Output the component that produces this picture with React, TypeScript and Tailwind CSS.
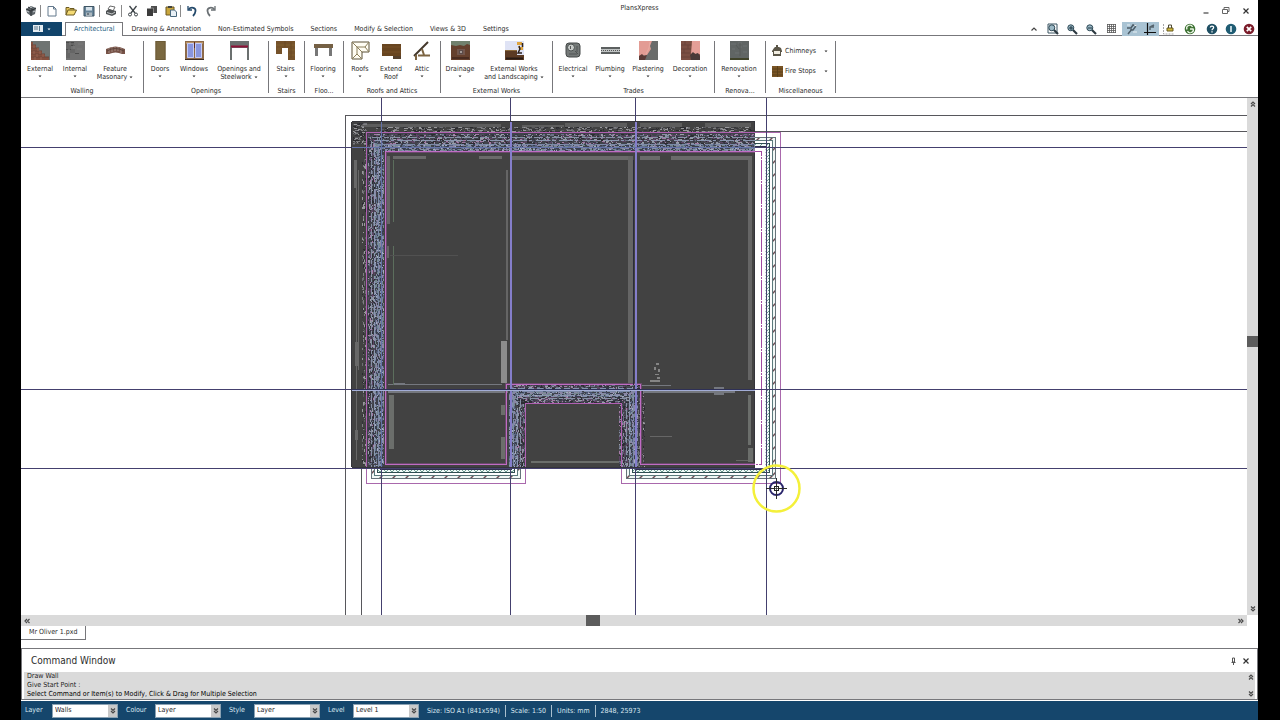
import React, { useMemo, useState } from 'react'

type IconProps = { className?: string }

interface RibbonItem {
  lines: string[]
  icon: React.ReactNode
  width: string
  menu?: boolean
}

interface RibbonGroup {
  title: string
  label?: string
  width: string
  items: RibbonItem[]
}

/* ---------- ribbon icons (19 x 19) ---------- */

const Tile = ({ children }: { children: React.ReactNode }) => (
  <svg className="h-[19px] w-[19px]" viewBox="0 0 19 19" aria-hidden="true">
    {children}
  </svg>
)

const externalIcon = (
  <Tile>
    <rect width="19" height="19" fill="#6f7472" />
    <path d="M0 1h2v3h3v3h3v3h3v3h3v3h4v3H0z" fill="#85503f" />
    <path d="M0 4h5M0 7h8M0 10h11M0 13h14M0 16h18" stroke="#6d463b" />
    <path d="M3 4v3M7 7v3M3 10v3M9 10v3M6 13v3M12 13v3M4 16v3M10 16v3" stroke="#976454" />
  </Tile>
)

const internalIcon = (
  <Tile>
    <rect width="19" height="19" fill="#717171" />
    <path d="M0 1h8v3H5v4h4v4H4v5H0z" fill="#666" />
    <path d="M0 1.500h8M5 4.500h4M0 8.500h5M9 12.500h4" stroke="#4c4c4c" />
    <path d="M4 1v3M8 4v4M3 8v4M12 3h5M11 8h5" stroke="#7c7c7c" />
  </Tile>
)

const masonryIcon = (
  <Tile>
    <path d="M0 8Q9.500 3 19 8v5h-3q-6.500-3-13 0H0z" fill="#775348" />
    <path d="M3 7v5M6 6v5M9 6v4M12 6v4M15 7v5" stroke="#a48b80" />
    <path d="M1 10q8-5 17 0" fill="none" stroke="#5c443b" />
  </Tile>
)

const doorsIcon = (
  <Tile>
    <rect x="4.500" width="10" height="19" fill="#7a6840" />
    <rect x="5" y=".5" width="9" height="18" fill="none" stroke="#6c5b36" />
  </Tile>
)

const windowsIcon = (
  <Tile>
    <rect width="19" height="19" fill="#8d6a49" />
    <rect x="1" y="1" width="17" height="2" fill="#b99366" />
    <rect x="2" y="2" width="7" height="15" fill="#8995dd" />
    <rect x="10" y="2" width="7" height="15" fill="#8995dd" />
    <path d="M2.500 2.500h6v14h-6zM10.500 2.500h6v14h-6z" fill="none" stroke="#c6cbf4" />
    <path d="M9.500 1v6" stroke="#5c2b22" />
    <path d="M0 18.500h19" stroke="#3c2b22" />
  </Tile>
)

const openingsIcon = (
  <Tile>
    <path d="M0 0h19v19h-2V7H2v12H0z" fill="#6b706f" />
    <path d="M1 5.500h17" stroke="#8e1238" strokeWidth="2" />
  </Tile>
)

const stairsIcon = (
  <Tile>
    <path d="M0 0h19v19h-7V7H6v6H0z" fill="#75522a" />
    <path d="M0 4h19M1 8h4M13 9h6M13 14h6" stroke="#80602f" />
    <path d="M9 0v6M15 1v16" stroke="#6a4923" />
  </Tile>
)

const flooringIcon = (
  <Tile>
    <path d="M0 3h19v4H0z" fill="#756044" />
    <path d="M1 7h3v8H1zM15 7h3v8h-3z" fill="#777" />
  </Tile>
)

const roofsIcon = (
  <Tile>
    <path d="M1 1h17v10h-7v7H1z" fill="#fffdf3" stroke="#5a5137" />
    <path d="M1 1l5 5v7l-5 5M6 6h8l4-5M14 6l4 5M6 13l5 5M6 6l5 5" fill="none" stroke="#8b7f5b" />
  </Tile>
)

const extendRoofIcon = (
  <Tile>
    <path d="M0 3h19v15h-8v-3H0z" fill="#684520" />
    <path d="M0 6h19M0 11h19" stroke="#775126" />
    <path d="M11 15h8v3h-8z" fill="#54402d" />
  </Tile>
)

const atticIcon = (
  <Tile>
    <path d="M1 15L15 1" stroke="#44382b" strokeWidth="2" />
    <path d="M5 14.500h12M3 14v5M9 8l2 6" fill="none" stroke="#7c6442" strokeWidth="2" />
  </Tile>
)

const drainageIcon = (
  <Tile>
    <rect width="19" height="19" fill="#65402d" />
    <path d="M0 0h19v4l-3-1-3 2-4-1-4 1-5-1z" fill="#71816d" />
    <rect x="6" y="8" width="8" height="6" fill="#73574d" />
    <rect x="8.500" y="9.500" width="3" height="3" fill="#a29995" stroke="#5b4b48" />
    <path d="M1 17h17" stroke="#4a2c20" strokeWidth="2" />
  </Tile>
)

const landscapingIcon = (
  <Tile>
    <rect width="19" height="19" fill="#dfe3f5" />
    <path d="M0 10h12v4h7v5H0z" fill="#5c3b24" />
    <path d="M0 9.500h12" stroke="#8b6a3c" />
    <path d="M12 1h5v3h-5zM13 6h5v3h-3z" fill="#dfa53f" />
    <path d="M17.500 2v4M14 5l1 3-2 4h4" fill="none" stroke="#2b211c" strokeWidth="1.500" />
    <path d="M1 17.500h17" stroke="#291b14" strokeWidth="2" />
  </Tile>
)

const electricalIcon = (
  <Tile>
    <rect x="2" y="2" width="14" height="14" rx="3" fill="#747978" stroke="#454948" />
    <circle cx="7" cy="6.500" r="3.500" fill="#c6cac8" stroke="#4e5352" />
    <path d="M6.500 5v3" stroke="#555" />
    <path d="M11 10l3 3M5 13h8M13 5v6" stroke="#515554" />
  </Tile>
)

const plumbingIcon = (
  <Tile>
    <rect y="6" width="19" height="7" fill="#bfc3c3" />
    <path d="M0 7h19M0 12h19" stroke="#5c6060" strokeWidth="2" />
    <path d="M0 9.500h19" stroke="#555" strokeDasharray="1 1" />
  </Tile>
)

const plasteringIcon = (
  <Tile>
    <rect width="19" height="19" fill="#6a6c6b" />
    <path d="M0 0h13l-2 5 1 3-4 6-8 1z" fill="#e39c94" />
    <path d="M0 15l3-2 2 2 3-1-2 5H0z" fill="#5c3a36" />
    <path d="M11 1l-1 6-3 6" fill="none" stroke="#e8aca3" />
  </Tile>
)

const decorationIcon = (
  <Tile>
    <rect width="19" height="19" fill="#7b4f43" />
    <path d="M0 4h11M0 8h10M0 12h9M0 16h9M4 0v4M7 4v4M3 8v4" stroke="#6b453b" />
    <path d="M11 0h8v13l-3 1-3-2-3 1z" fill="#e59f97" />
    <path d="M9 14l3-3 2 2 3-1 2 3v4H10z" fill="#493a38" />
  </Tile>
)

const renovationIcon = (
  <Tile>
    <rect width="19" height="19" fill="#606564" />
    <path d="M1 3h5M8 2h4M13 5h4M2 8h3M9 6h3M5 12h5M13 11h4" stroke="#6d7372" />
    <path d="M10 2v13M6 4l3 4" stroke="#565a59" />
    <path d="M0 18h19" stroke="#40432a" strokeWidth="2" />
  </Tile>
)

const groups: RibbonGroup[] = [
  {
    title: 'Walling',
    width: 'w-[123px]',
    items: [
      { lines: ['External'], icon: externalIcon, width: 'w-[38px]', menu: true },
      { lines: ['Internal'], icon: internalIcon, width: 'w-8', menu: true },
      { lines: ['Feature', 'Masonary'], icon: masonryIcon, width: 'w-12', menu: true },
    ],
  },
  {
    title: 'Openings',
    width: 'w-[125px]',
    items: [
      { lines: ['Doors'], icon: doorsIcon, width: 'w-8', menu: true },
      { lines: ['Windows'], icon: windowsIcon, width: 'w-9', menu: true },
      { lines: ['Openings and', 'Steelwork'], icon: openingsIcon, width: 'w-[54px]', menu: true },
    ],
  },
  {
    title: 'Stairs',
    width: 'w-9',
    items: [{ lines: ['Stairs'], icon: stairsIcon, width: 'w-9', menu: true }],
  },
  {
    title: 'Flooring',
    label: 'Floo...',
    width: 'w-[39px]',
    items: [{ lines: ['Flooring'], icon: flooringIcon, width: 'w-9', menu: true }],
  },
  {
    title: 'Roofs and Attics',
    width: 'w-[97px]',
    items: [
      { lines: ['Roofs'], icon: roofsIcon, width: 'w-8', menu: true },
      { lines: ['Extend', 'Roof'], icon: extendRoofIcon, width: 'w-[30px]' },
      { lines: ['Attic'], icon: atticIcon, width: 'w-8', menu: true },
    ],
  },
  {
    title: 'External Works',
    width: 'w-28',
    items: [
      { lines: ['Drainage'], icon: drainageIcon, width: 'w-[38px]', menu: true },
      { lines: ['External Works', 'and Landscaping'], icon: landscapingIcon, width: 'w-[70px]', menu: true },
    ],
  },
  {
    title: 'Trades',
    width: 'w-[162px]',
    items: [
      { lines: ['Electrical'], icon: electricalIcon, width: 'w-10', menu: true },
      { lines: ['Plumbing'], icon: plumbingIcon, width: 'w-[34px]', menu: true },
      { lines: ['Plastering'], icon: plasteringIcon, width: 'w-[42px]', menu: true },
      { lines: ['Decoration'], icon: decorationIcon, width: 'w-[42px]', menu: true },
    ],
  },
  {
    title: 'Renovation',
    label: 'Renova...',
    width: 'w-[51px]',
    items: [{ lines: ['Renovation'], icon: renovationIcon, width: 'w-12', menu: true }],
  },
]

/* ---------- small icons ---------- */

const Small = ({ children, className = 'h-3 w-3' }: IconProps & { children: React.ReactNode }) => (
  <svg className={className} viewBox="0 0 12 12" fill="none" aria-hidden="true">
    {children}
  </svg>
)

const Caret = ({ className = 'h-[3px] w-1' }: IconProps) => (
  <svg className={className} viewBox="0 0 4 3" aria-hidden="true">
    <path d="M.5 .5h3L2 2.300z" fill="currentColor" />
  </svg>
)

const DoubleChevron = ({ className = '' }: IconProps) => (
  <svg className={`h-2 w-2 ${className}`} viewBox="0 0 8 8" fill="none" aria-hidden="true">
    <path d="M2 4l2-2 2 2M2 6.500l2-2 2 2" stroke="#4a4a4a" strokeWidth="1.200" />
  </svg>
)

const quickAccess: { name: string; width: string; icon: React.ReactNode; divider?: boolean }[] = [
  {
    name: 'PlansXpress',
    width: 'w-5',
    divider: true,
    icon: (
      <Small>
        <path d="M1 4l5-3 5 2-1 6-4 2-4-3z" fill="#5d6469" />
        <path d="M1 4l5 2 5-3M6 6v5M3 2l5 3" stroke="#2c3236" />
        <path d="M2 6l2 1M8 7l2-1M5 3l2-1" stroke="#c4cacd" />
      </Small>
    ),
  },
  {
    name: 'New',
    width: 'w-[22px]',
    icon: (
      <Small>
        <path d="M2 1.500h5.500L10 4v7H2z" fill="#fff" stroke="#62788c" />
        <path d="M7.500 1.500V4H10" stroke="#62788c" />
      </Small>
    ),
  },
  {
    name: 'Open',
    width: 'w-[15px]',
    icon: (
      <Small>
        <path d="M1 10V2.500h3l1 1h4V5" fill="#e0c15a" stroke="#6b5a22" />
        <path d="M1 10l2-5h8.500L9 10z" fill="#f4da74" stroke="#6b5a22" />
      </Small>
    ),
  },
  {
    name: 'Save',
    width: 'w-[22px]',
    divider: true,
    icon: (
      <Small>
        <path d="M1 1.500h10v9.500H1z" fill="#668499" stroke="#3f5564" />
        <path d="M3 2h6v3.500H3z" fill="#d6e2ea" />
        <path d="M3 7.500h6V11H3z" fill="#abb7be" />
        <path d="M4 9h2" stroke="#2c3b46" />
      </Small>
    ),
  },
  {
    name: 'Print',
    width: 'w-[22px]',
    divider: true,
    icon: (
      <Small>
        <path d="M3 4l2-3 5 1-2 4z" fill="#fff" stroke="#6a6a6a" />
        <path d="M1 6l3-2 7 2v3l-4 2-6-2z" fill="#4f5355" />
        <path d="M2 7.500l5 1.500 3-2" stroke="#c5c8c9" />
      </Small>
    ),
  },
  {
    name: 'Cut',
    width: 'w-[22px]',
    icon: (
      <Small>
        <path d="M2.500 1L8 8M9.500 1L4 8" stroke="#3c4347" strokeWidth="1.300" />
        <circle cx="3" cy="9.500" r="1.500" stroke="#3c4347" />
        <circle cx="9" cy="9.500" r="1.500" stroke="#3c4347" />
      </Small>
    ),
  },
  {
    name: 'Copy',
    width: 'w-4',
    icon: (
      <Small>
        <path d="M5 1h6v7H5z" fill="#4d4d4d" />
        <path d="M1 3.500h6V11H1z" fill="#3c3c3c" />
        <path d="M4.500 3h3v5" stroke="#858585" />
      </Small>
    ),
  },
  {
    name: 'Paste',
    width: 'w-[21px]',
    divider: true,
    icon: (
      <Small>
        <path d="M1 2h8v8H1z" fill="#c9a63d" stroke="#6d5923" />
        <path d="M3 1h4v2H3z" fill="#41433f" />
        <path d="M5.500 5h4l2 2v4.500h-6z" fill="#e8f0f6" stroke="#49677c" />
      </Small>
    ),
  },
  {
    name: 'Undo',
    width: 'w-[22px]',
    icon: (
      <Small>
        <path d="M2 1v4h4" stroke="#23496b" strokeWidth="1.300" />
        <path d="M2.500 4.500C5 1.500 10 2.500 9.500 6 9.300 8.500 8 10 7 11" stroke="#23496b" strokeWidth="1.800" />
      </Small>
    ),
  },
  {
    name: 'Redo',
    width: 'w-4',
    icon: (
      <Small>
        <path d="M10 1v4H6" stroke="#6a7074" strokeWidth="1.300" />
        <path d="M9.500 4.500C7 1.500 2 2.500 2.500 6 2.700 8.500 4 10 5 11" stroke="#6a7074" strokeWidth="1.800" />
      </Small>
    ),
  },
]

const Magnifier = ({ frame, sign }: { frame?: boolean; sign?: string }) => (
  <Small>
    {frame && <path d="M1 1h9v9H1z" fill="#fff" stroke="#3b5563" />}
    <path d="M7 7l4 4" stroke="#2c3940" strokeWidth="2.200" />
    <circle cx="4.800" cy="4.800" r="3" fill="#9cb9c6" stroke="#2b4654" />
    {sign && <path d={sign} stroke="#1d3440" />}
  </Small>
)

const viewTools = [
  { name: 'Collapse ribbon', width: 'w-[18px]', icon: <Small><path d="M3.500 7.500L6 5l2.500 2.500" stroke="#444" strokeWidth="1.200" /></Small> },
  { name: 'Zoom window', width: 'w-[19px]', icon: <Magnifier frame /> },
  { name: 'Zoom in', width: 'w-[19px]', icon: <Magnifier sign="M3 5h4M5 3v4" /> },
  { name: 'Zoom out', width: 'w-[19px]', icon: <Magnifier sign="M3 5h4" /> },
  {
    name: 'Grid',
    width: 'w-[22px]',
    icon: (
      <Small>
        <path d="M2.500 1v9M4.500 1v9M6.500 1v9M8.500 1v9M10.500 1v9M2 1.500h9M2 3.500h9M2 5.500h9M2 7.500h9M2 9.500h9" stroke="#5a5a5a" strokeWidth=".8" />
      </Small>
    ),
  },
]

const helpTools = [
  {
    name: 'Lock',
    width: 'w-[19px]',
    icon: (
      <Small>
        <path d="M.5 1v10h10" stroke="#a5a5a5" strokeDasharray="2 1" />
        <path d="M4 5h6v3H4z" fill="#d0b93c" stroke="#66591e" />
        <path d="M5.500 5V2h3v3" stroke="#4f4a33" />
      </Small>
    ),
  },
  {
    name: 'Refresh',
    width: 'w-6',
    icon: (
      <Small>
        <circle cx="6" cy="6" r="5.300" fill="#3f7235" />
        <path d="M3 6.500A3 3 0 0 1 8.500 4M9 5.500A3 3 0 0 1 3.500 8M6 6h3" stroke="#e9f4e4" strokeWidth="1.300" />
      </Small>
    ),
  },
  {
    name: 'Help',
    width: 'w-[19px]',
    icon: (
      <Small>
        <circle cx="6" cy="6" r="5.300" fill="#1f4f63" />
        <path d="M4.300 4.500C4.500 2.500 7.800 2.700 7.600 4.700 7.500 5.700 6 5.800 6 7.200M6 8.300v1.300" stroke="#fff" strokeWidth="1.300" />
      </Small>
    ),
  },
  {
    name: 'Information',
    width: 'w-[19px]',
    icon: (
      <Small>
        <circle cx="6" cy="6" r="5.300" fill="#1f5c73" />
        <path d="M6 3v6" stroke="#e4f2f7" strokeWidth="1.600" />
      </Small>
    ),
  },
  {
    name: 'Exit',
    width: 'w-[18px]',
    icon: (
      <Small>
        <circle cx="6" cy="6" r="5.300" fill="#7b1c2a" />
        <path d="M3.800 3.800l4.400 4.400M8.200 3.800L3.800 8.200" stroke="#fff" strokeWidth="1.700" />
      </Small>
    ),
  },
]

/* ---------- floor plan ---------- */

// Wall outline moved inwards by d from the outer face
const wall = (d: number) =>
  `M${366.5 + d} ${132.5 + d}H${780.5 - d}V${483.5 - d}H${621.5 + d}V${403.5 - d}H${525.5 - d}V${483.5 - d}H${366.5 + d}Z`

interface Strip {
  x: number
  y: number
  w: number
  h: number
  n: number
  flat: boolean
  tones: string[]
}

const greys = ['#34343a', '#5a5a5e', '#7e7e82', '#2a2a2e', '#6e6e74', '#98989c']
const mixed = ['#343846', '#8c93a4', '#2c2c32', '#5c4464', '#6a7286', '#a47aa4', '#4c4c58', '#9a9ea8', '#505060']
const blues = ['#66738f', '#8490ac', '#465068', '#a3abbe', '#74888f', '#56627e', '#383e4e', '#8a86a4']

const strips: Strip[] = [
  { x: 376, y: 127, w: 379, h: 5, n: 620, flat: true, tones: greys },
  { x: 353, y: 123, w: 12, h: 22, n: 110, flat: true, tones: greys },
  { x: 368, y: 134, w: 387, h: 10, n: 2100, flat: true, tones: mixed },
  { x: 374, y: 144, w: 381, h: 7, n: 2300, flat: true, tones: blues },
  { x: 362, y: 132, w: 4, h: 333, n: 260, flat: false, tones: greys },
  { x: 368, y: 135, w: 7, h: 330, n: 1400, flat: false, tones: mixed },
  { x: 375, y: 138, w: 9, h: 328, n: 2100, flat: false, tones: blues },
  { x: 509, y: 385, w: 132, h: 5, n: 420, flat: true, tones: mixed },
  { x: 512, y: 391, w: 124, h: 6, n: 700, flat: true, tones: blues },
  { x: 514, y: 397, w: 120, h: 7, n: 620, flat: true, tones: mixed },
  { x: 509, y: 390, w: 8, h: 77, n: 480, flat: false, tones: blues },
  { x: 517, y: 397, w: 8, h: 70, n: 420, flat: false, tones: mixed },
  { x: 619, y: 404, w: 10, h: 63, n: 450, flat: false, tones: mixed },
  { x: 629, y: 391, w: 9, h: 76, n: 520, flat: false, tones: blues },
  { x: 638, y: 391, w: 7, h: 76, n: 110, flat: false, tones: greys },
]

// Fine masonry texture, the same on every render
const buildSpecks = () => {
  let seed = 7
  const rand = () => {
    seed = (seed * 16807) % 2147483647
    return seed / 2147483647
  }
  const paths: Record<string, string> = {}
  strips.forEach(s => {
    for (let i = 0; i < s.n; i++) {
      const long = 1 + Math.floor(rand() * 3)
      const x = s.x + Math.floor(rand() * s.w)
      const y = s.y + Math.floor(rand() * s.h)
      const tone = s.tones[Math.floor(rand() * s.tones.length)]
      paths[tone] = (paths[tone] ?? '') + (s.flat ? `M${x} ${y}h${long}v1h-${long}z` : `M${x} ${y}h1v${long}h-1z`)
    }
  })
  return Object.entries(paths)
}

const WallLines = () => (
  <g fill="none">
    <path d={wall(6.5)} stroke="url(#brick)" strokeWidth="4" />
    <path d={wall(13)} stroke="url(#block)" strokeWidth="4" />
    <g shapeRendering="crispEdges">
      <path d={wall(5)} stroke="#66737a" />
      <path d={wall(8)} stroke="#5b7a7c" />
      <path d={wall(11)} stroke="#2f4e52" />
      <path d={wall(14)} stroke="#30304e" />
      <path d={wall(0)} stroke="#a968ac" />
      <path d={wall(19)} stroke="#a04aa0" strokeDasharray="20 1 2 1" />
    </g>
  </g>
)

const Plan = () => {
  const specks = useMemo(buildSpecks, [])

  return (
    <svg className="h-full w-full" role="img" aria-label="Floor plan">
      <defs>
        <pattern id="brick" width="13" height="13" patternUnits="userSpaceOnUse">
          <rect width="13" height="13" fill="#f1f8f6" />
          <path d="M-1 14L14 -1" stroke="#6a4a52" strokeWidth="1.500" />
        </pattern>
        <pattern id="block" width="6" height="6" patternUnits="userSpaceOnUse">
          <rect width="6" height="6" fill="#f0faf8" />
          <path d="M-1 7L7 -1M0 2l4 4" stroke="#4f8577" strokeWidth=".8" />
        </pattern>
        <clipPath id="slab">
          <rect x="352" y="122" width="403" height="345" />
        </clipPath>
      </defs>

      <g transform="translate(-21 -98)">
        <g stroke="#57575c" fill="none" shapeRendering="crispEdges">
          <path d="M3000 115.500H345.500V3000" />
          <path d="M3000 131.500H361.500V3000" />
        </g>

        <WallLines />

        {/* setting-out lines */}
        <path
          d="M0 147.500H3000M0 389.500H3000M0 468.500H3000M381.500 98V3000M510.500 98V3000M635.500 98V3000M766.500 98V3000"
          stroke="#44406e"
          fill="none"
          shapeRendering="crispEdges"
        />

        <rect x="352" y="122" width="403" height="345" fill="#424242" />
        <path d="M352 467.500h403M754.500 122v345M351.500 122v345M352 121.500h403" stroke="#34343a" shapeRendering="crispEdges" />

        <g clipPath="url(#slab)">
          {/* shaded bands */}
          <path d="M361 124h140v3H361zM522 125h42v2h-42zM565 123h62v4h-62zM640 123h42v4h-42zM705 123h46v4h-46z" fill="#5d5d5d" />
          <path d="M393 156h33v3h-33zM479 156h23v3h-23zM511 156h117v4H511zM640 156h20v4h-20zM671 156h81v4h-81z" fill="#6a6a6a" />
          <path d="M386 156h4v68h-4zM386 246h3v12h-3zM628 156h5v227h-5zM748 160h4v220h-4zM506 170h2v170h-2z" fill="#656565" />
          <path d="M501 341h6v42h-6z" fill="#8c8c8c" />
          <path d="M394 383h11v2h-11zM388 384h114v1H388zM388 391h120v2H388zM642 391h93v2h-93zM714 387h10v8h-10zM642 385h29v1h-29z" fill="#75787f" />
          <path d="M389 395h5v54h-5zM501 405h4v10h-4zM501 437h4v22h-4zM748 395h3v50h-3zM748 448h5v14h-5zM531 461h88v2h-88z" fill="#6b6e6b" />
          <path d="M356 160h1v300h-1zM354 160h3v28h-3zM358 170h1v200h-1zM355 342h3v24h-3zM355 430h3v10h-3z" fill="#686868" />
          <path d="M393.500 160v62M393.500 246v12M393.500 258V385" stroke="#5c6e5d" />
          <path d="M390 255.500h68" stroke="#515151" />
          <path d="M650 436.500h22M736 460.500h12" stroke="#666" />
          <path d="M656 363h3v2h-3zM654 367h2v3h-2zM658 369h2v3h-2zM655 374h4v1h-4zM657 377h3v2h-3zM650 380h10v2h-10z" fill="#858585" />

          {/* solid bed under the masonry texture */}
          <path d="M366 132H755V151H384V467H366z" fill="#40424a" />
          <path d="M508 385H641V467H621V404H526V467H508z" fill="#40424a" />

          {specks.map(([tone, d]) => (
            <path key={tone} d={d} fill={tone} />
          ))}

          <g fill="none" shapeRendering="crispEdges">
            <path d={wall(5)} stroke="#8790a6" strokeDasharray="9 3 4 2" />
            <path d={wall(8)} stroke="#8a96b0" strokeDasharray="14 2 3 4" />
            <path d={wall(12)} stroke="#7c8aa8" strokeDasharray="12 3 7 2" />
            <path d={wall(15)} stroke="#8494b0" strokeDasharray="6 3" />
            <path d={wall(0)} stroke="#b060b2" />
            <path d={wall(20)} stroke="#6a4a6c" />
            <path d={wall(19)} stroke="#c06cc4" />
            <path d="M511 122V467M636 122V467" stroke="#857ecb" strokeWidth="2" />
            <path d="M633.500 160V385" stroke="#2c2c3a" />
            <path d="M381.500 122V467M352 147.500H755" stroke="#6472a8" />
            <path d="M352 390.500H755" stroke="#a3add6" />
            <path d="M352 389.500H755" stroke="#2e3056" />
          </g>
        </g>

        {/* cursor */}
        <circle cx="776.500" cy="488.500" r="23" fill="none" stroke="#f4f03a" strokeWidth="2.500" />
        <circle cx="776.500" cy="488.500" r="6.500" fill="none" stroke="#29246b" strokeWidth="2" />
        <path d="M766 488.500h21M776.500 478v21" stroke="#2b2b2b" />
        <rect x="774.500" y="486.500" width="4" height="4" fill="#fff" stroke="#222" />
        <path d="M774 488.500h5M776.500 486v5" stroke="#222" strokeWidth=".7" />
      </g>
    </svg>
  )
}

/* ---------- window parts ---------- */

const TitleBar = () => (
  <header className="grid h-[22px] shrink-0 grid-cols-[1fr_auto_1fr]">
    <div className="flex items-center">
      {quickAccess.map(tool => (
        <React.Fragment key={tool.name}>
          <button className={`flex h-4 items-center justify-center ${tool.width}`} aria-label={tool.name}>
            {tool.icon}
          </button>
          {tool.divider && <span className="-ml-px h-3 w-px bg-[#8a8a8a]" />}
        </React.Fragment>
      ))}
    </div>
    <h1 className="pt-1 leading-2">PlansXpress</h1>
    <div className="flex items-center justify-end pr-0.5">
      <button className="flex w-5 justify-center" aria-label="Minimise">
        <Small><path d="M3.500 8h5" stroke="#444" strokeWidth="1.200" /></Small>
      </button>
      <button className="flex w-5 justify-center" aria-label="Restore">
        <Small><path d="M2.500 4.500h5v4h-5zM4 4.500v-2h5v4H7.500" stroke="#666" /></Small>
      </button>
      <button className="flex w-5 justify-center" aria-label="Close">
        <Small><path d="M3.500 3.500l5 5M8.500 3.500l-5 5" stroke="#333" strokeWidth="1.200" /></Small>
      </button>
    </div>
  </header>
)

const tabs = ['Architectural', 'Drawing & Annotation', 'Non-Estimated Symbols', 'Sections', 'Modify & Selection', 'Views & 3D', 'Settings']

const TabBar = () => {
  const [active, setActive] = useState('Architectural')

  return (
    <nav className="flex h-3.5 shrink-0 items-stretch shadow-[inset_0_-1px_0_#77777b]">
      <button className="mr-[3px] flex w-[41px] items-center justify-center gap-1 bg-[#11446b] text-white" aria-label="File">
        <svg className="h-2 w-2.5" viewBox="0 0 10 8" aria-hidden="true">
          <rect width="10" height="7" fill="#e4ecf1" />
          <path d="M1 2h4M1 4h4M6.500 1v5" stroke="#5c7b90" />
        </svg>
        <Caret />
      </button>
      {tabs.map(tab => (
        <button
          key={tab}
          onClick={() => setActive(tab)}
          className={
            tab === active
              ? 'border-x border-t border-[#77777b] bg-white px-2 text-[#1d5c80]'
              : 'pl-2 pr-[9px] pt-px text-[#2b2b2b]'
          }
        >
          {tab}
        </button>
      ))}
      <div className="ml-auto flex items-center">
        {viewTools.map(tool => (
          <button key={tool.name} className={`flex justify-center ${tool.width}`} aria-label={tool.name}>
            {tool.icon}
          </button>
        ))}
        <button className="flex h-full w-[19px] items-center justify-center bg-[#a9c3d3]" aria-label="Snap">
          <Small>
            <path d="M2 11L6 6M1 5h4l2-3 3 1-3 4H4" stroke="#4d5d68" strokeWidth="1.500" />
            <path d="M7 9h4M8 2l3 1M1 2h3" stroke="#e8f0f4" />
          </Small>
        </button>
        <button className="flex h-full w-[18px] items-center justify-center bg-[#a9c3d3]" aria-label="Ortho">
          <Small>
            <path d="M3.500 0v12M0 9.500h12" stroke="#111" strokeWidth="1.200" />
            <path d="M6 7V4l4-2M6 4h4" stroke="#56656f" strokeWidth="1.500" />
          </Small>
        </button>
        {helpTools.map(tool => (
          <button key={tool.name} className={`flex justify-center ${tool.width}`} aria-label={tool.name}>
            {tool.icon}
          </button>
        ))}
      </div>
    </nav>
  )
}

const RibbonButton = ({ item }: { item: RibbonItem }) => {
  const last = item.lines.length - 1

  return (
    <button className={`flex flex-col items-center whitespace-nowrap ${item.width}`}>
      {item.icon}
      <span className="mt-[5px] flex flex-col items-center leading-2">
        {item.lines.map((line, i) => (
          <span key={line} className="flex items-center gap-0.5">
            {line}
            {item.menu && last > 0 && i === last && <Caret />}
          </span>
        ))}
      </span>
      {item.menu && last === 0 && <Caret className="mt-0.5 h-[3px] w-1" />}
    </button>
  )
}

const miscItems = [
  {
    label: 'Chimneys',
    icon: (
      <Small>
        <path d="M1 6l2-3 1-1h1V0h2v2h1l2 1 1 3v1h-1v4H2V7H1z" fill="#5b5648" />
        <path d="M3 6h6v3H3z" fill="#f1ede1" />
      </Small>
    ),
  },
  {
    label: 'Fire Stops',
    icon: (
      <Small>
        <path d="M1 1h11v11H1z" fill="#7a5526" />
        <path d="M1 4h11M1 7h11M1 10h11M6.500 1v11" stroke="#5b4019" />
      </Small>
    ),
  },
]

const Ribbon = () => (
  <section className="flex h-[62px] shrink-0 border-b border-[#77777b] pb-1 pt-[5px]" aria-label="Ribbon">
    {groups.map(group => (
      <div key={group.title} className={`flex flex-col items-center justify-between border-r border-[#77777b] ${group.width}`}>
        <div className="flex w-full pr-0.5">
          {group.items.map(item => (
            <RibbonButton key={item.lines[0]} item={item} />
          ))}
        </div>
        <span className="leading-[3px]">{group.label ?? group.title}</span>
      </div>
    ))}
    <div className="flex w-[70px] flex-col items-center justify-between border-r border-[#77777b]">
      <div className="flex w-full flex-col gap-2 pl-[5px] pt-1">
        {miscItems.map(item => (
          <button key={item.label} className="flex items-center gap-0.5 whitespace-nowrap leading-3">
            {item.icon}
            {item.label}
            <Caret className="ml-auto mr-[7px] h-[3px] w-1" />
          </button>
        ))}
      </div>
      <span className="leading-[3px]">Miscellaneous</span>
    </div>
  </section>
)

const CommandWindow = () => (
  <section className="flex h-[52px] shrink-0 flex-col border border-[#77777b] bg-white" aria-label="Command Window">
    <div className="flex h-[23px] shrink-0 items-center pl-[9px] pr-[5px]">
      <h2 className="text-[10px]">Command Window</h2>
      <button className="ml-auto" aria-label="Pin">
        <Small>
          <path d="M4.500 3h2v4h-2zM3.500 7.500h4M5.500 8v2" stroke="#555" />
        </Small>
      </button>
      <button aria-label="Close command window">
        <Small><path d="M3.500 3.500l5 5M8.500 3.500l-5 5" stroke="#333" strokeWidth="1.200" /></Small>
      </button>
    </div>
    <div className="mx-0.5 flex h-[27px] items-stretch justify-between bg-[#dadada] pl-[3px]">
      <div className="flex flex-col justify-end text-[#222]">
        <p className="leading-[9px]">Draw Wall</p>
        <p className="leading-[9px]">Give Start Point :</p>
        <p className="leading-[9px] text-black">Select Command or Item(s) to Modify, Click &amp; Drag for Multiple Selection</p>
      </div>
      <div className="flex flex-col justify-between py-px">
        <button aria-label="Scroll up"><DoubleChevron /></button>
        <button aria-label="Scroll down"><DoubleChevron className="rotate-180" /></button>
      </div>
    </div>
  </section>
)

const statusFields = [
  { id: 'layer', label: 'Layer', width: 'w-[27px]', value: 'Walls' },
  { id: 'colour', label: 'Colour', width: 'w-[29px]', value: 'Layer' },
  { id: 'style', label: 'Style', width: 'w-[25px]', value: 'Layer' },
  { id: 'level', label: 'Level', width: 'w-[25px]', value: 'Level 1' },
]

const StatusBar = () => (
  <footer className="mt-px flex h-[19px] shrink-0 items-center bg-[#15466c] pl-1 text-[#dce9f2]">
    {statusFields.map(field => (
      <div key={field.id} className="mr-2 flex items-center">
        <label htmlFor={field.id} className={field.width}>{field.label}</label>
        <div className="relative">
          <select
            id={field.id}
            className="h-3.5 w-[66px] appearance-none rounded-none border border-[#8ba2b3] bg-white pl-0.5 text-[7px] text-[#1c1c1c]"
            defaultValue={field.value}
          >
            <option>{field.value}</option>
          </select>
          <span className="pointer-events-none absolute inset-y-px right-px flex w-[9px] items-center justify-center bg-[#c9c9c9]">
            <DoubleChevron className="rotate-180" />
          </span>
        </div>
      </div>
    ))}
    <div className="flex items-center divide-x divide-[#a9bfce] leading-3">
      <span className="pr-[5px]">Size: ISO A1 (841x594)</span>
      <span className="px-[5px]">Scale: 1:50</span>
      <span className="px-[5px]">Units: mm</span>
      <span className="px-[5px]">2848, 25973</span>
    </div>
  </footer>
)

const App = () => (
  <div className="h-screen bg-black pl-[21px] pr-[22px] font-['DejaVu_Sans_Condensed','DejaVu_Sans',sans-serif] text-[7px] text-[#2b2b2b]">
    <div className="flex h-full flex-col bg-white">
      <TitleBar />
      <TabBar />
      <Ribbon />

      <main className="grid min-h-0 flex-1 grid-cols-[1fr_11px] grid-rows-[1fr_11px]">
        <div className="min-h-0 overflow-hidden">
          <Plan />
        </div>
        <div className="flex flex-col items-center bg-[#dadada] py-0.5">
          <DoubleChevron />
          <span className="flex-[47]" />
          <span className="h-[11px] w-full bg-[#5c5c5c]" />
          <span className="flex-[53]" />
          <DoubleChevron className="rotate-180" />
        </div>
        <div className="flex items-center bg-[#dadada] px-0.5">
          <DoubleChevron className="-rotate-90" />
          <span className="flex-[466]" />
          <span className="h-full w-3.5 bg-[#5c5c5c]" />
          <span className="flex-[534]" />
          <DoubleChevron className="rotate-90" />
        </div>
      </main>

      <div className="mb-2 flex h-3.5 shrink-0">
        <button className="border-b border-r border-[#77777b] px-2">Mr Oliver 1.pxd</button>
      </div>
      <CommandWindow />
      <StatusBar />
    </div>
  </div>
)

export default App
